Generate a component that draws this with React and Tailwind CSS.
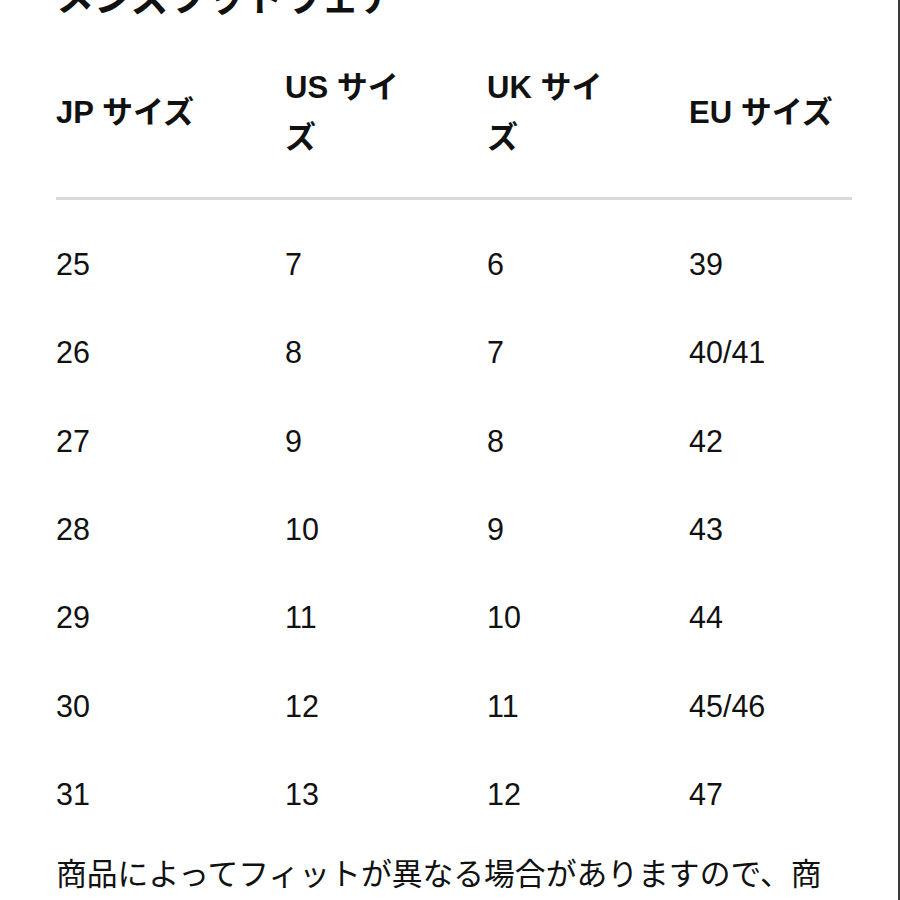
const rows = [
  ["25", "7", "6", "39"],
  ["26", "8", "7", "40/41"],
  ["27", "9", "8", "42"],
  ["28", "10", "9", "43"],
  ["29", "11", "10", "44"],
  ["30", "12", "11", "45/46"],
  ["31", "13", "12", "47"],
]

const cols = "grid grid-cols-[229px_202px_202px_163px]"

function SizeTable() {
  return (
    <div className="w-[796px]">
      <div className={`${cols} items-center h-[100px] text-[31px] leading-[50px] font-bold`}>
        <div>JP サイズ</div>
        <div>US サイ<br />ズ</div>
        <div>UK サイ<br />ズ</div>
        <div>EU サイズ</div>
      </div>
      <div className="mt-[34px] h-[3px] bg-[#d9d9d9]" />
      <div className="mt-[20px]">
        {rows.map((r) => (
          <div key={r[0]} className={`${cols} items-center h-[88.33px] text-[30.5px] leading-[36px]`}>
            {r.map((v, i) => (
              <div key={i}>{v}</div>
            ))}
          </div>
        ))}
      </div>
    </div>
  )
}

export default function App() {
  return (
    <div
      className="w-[900px] h-[900px] overflow-hidden bg-white text-[#111] border-r-2 border-[#3a3a3a] pl-[56px]"
      style={{ fontFamily: '"Liberation Sans", "Noto Sans CJK JP", sans-serif' }}
    >
      <h1 className="mt-[-21px] h-[38px] text-[38px] leading-[38px] font-bold whitespace-nowrap">
        メンズフットウェア
      </h1>
      <div className="mt-[46px]">
        <SizeTable />
      </div>
      <p className="mt-[14px] w-[790px] text-[30.8px] leading-[46px]">
        商品によってフィットが異なる場合がありますので、商品ページのサイズ表をご確認ください。
      </p>
    </div>
  )
}
